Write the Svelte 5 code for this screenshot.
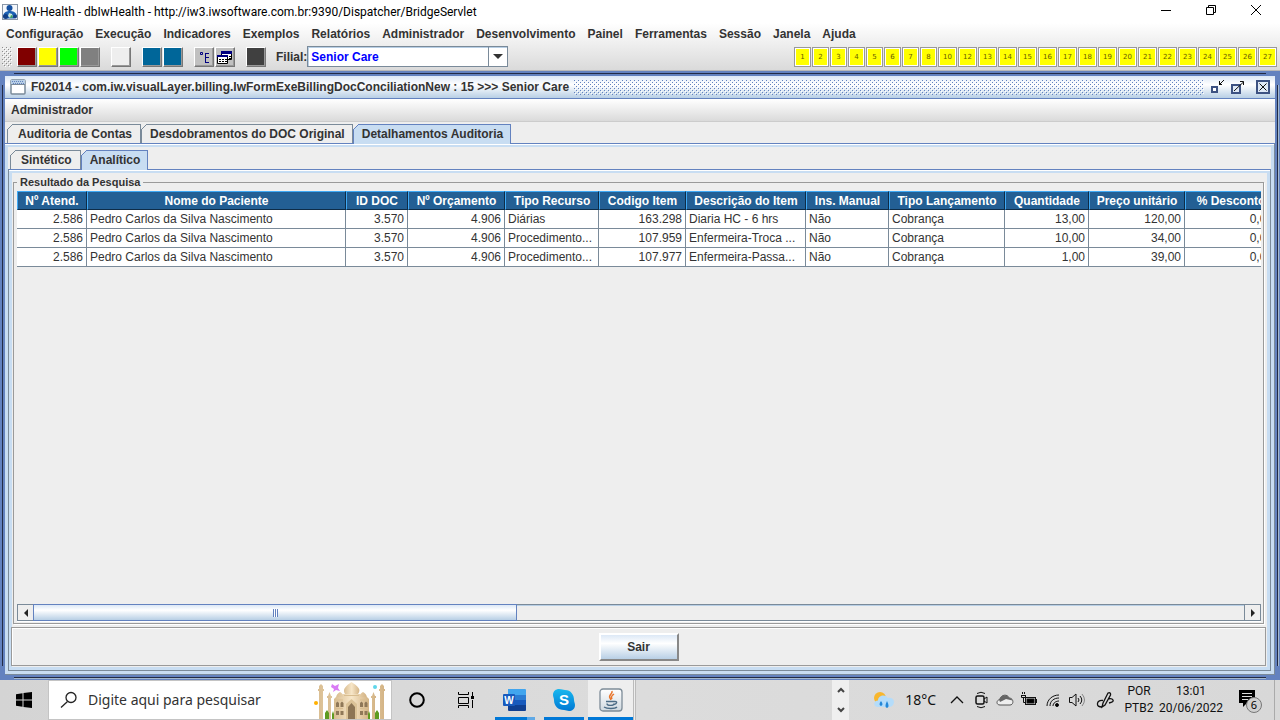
<script>
  const menus = ['Configuração', 'Execução', 'Indicadores', 'Exemplos', 'Relatórios', 'Administrador',
    'Desenvolvimento', 'Painel', 'Ferramentas', 'Sessão', 'Janela', 'Ajuda'];

  // Toolbar swatches, grouped the way the toolbar separates them
  const swatches = [
    ['#800000', '#ffff00', '#00ff00', '#808080'],
    ['#eeeeee'],
    ['#006699', '#006699'],
  ];

  const shortcuts = [1, 2, 3, 4, 5, 6, 7, 8, 10, 12, 13, 14, 15, 16, 17, 18, 19, 20, 21, 22, 23, 24, 25, 26, 27];

  const columns = [
    { label: 'Nº Atend.', w: 70, num: true },
    { label: 'Nome do Paciente', w: 259 },
    { label: 'ID DOC', w: 62, num: true },
    { label: 'Nº Orçamento', w: 97, num: true },
    { label: 'Tipo Recurso', w: 94 },
    { label: 'Codigo Item', w: 87, num: true },
    { label: 'Descrição do Item', w: 120 },
    { label: 'Ins. Manual', w: 83 },
    { label: 'Tipo Lançamento', w: 116 },
    { label: 'Quantidade', w: 84, num: true },
    { label: 'Preço unitário', w: 96, num: true },
    { label: '% Desconto', w: 92, num: true },
  ];

  const rows = [
    ['2.586', 'Pedro Carlos da Silva Nascimento', '3.570', '4.906', 'Diárias', '163.298', 'Diaria HC - 6 hrs', 'Não', 'Cobrança', '13,00', '120,00', '0,00'],
    ['2.586', 'Pedro Carlos da Silva Nascimento', '3.570', '4.906', 'Procedimento...', '107.959', 'Enfermeira-Troca ...', 'Não', 'Cobrança', '10,00', '34,00', '0,00'],
    ['2.586', 'Pedro Carlos da Silva Nascimento', '3.570', '4.906', 'Procedimento...', '107.977', 'Enfermeira-Passa...', 'Não', 'Cobrança', '1,00', '39,00', '0,00'],
  ];

  const tableWidth = columns.reduce((sum, c) => sum + c.w, 0);

  let outerTab = $state('Detalhamentos Auditoria');
  let innerTab = $state('Analítico');
  let filial = $state('Senior Care');
</script>

{#snippet tabs(list, current, pick)}
  <div class="tabs" role="tablist">
    {#each list as name}
      <button class="tab" class:active={name === current} role="tab" aria-selected={name === current} onclick={() => pick(name)}>
        <svg class="notch" width="6" height="6" viewBox="0 0 6 6" aria-hidden="true">
          <path class="cut" d="M0 0H6L0 6Z" />
          <path class="edge" d="M0 6L6 0" />
        </svg>
        {name}
      </button>
    {/each}
  </div>
{/snippet}

<div class="app">
  <header class="titlebar">
    <svg class="logo" width="16" height="16" viewBox="0 0 16 16" aria-hidden="true">
      <rect x=".5" y=".5" width="15" height="15" fill="#f4f7fb" stroke="#8a97a8" />
      <circle cx="7.5" cy="4" r="3" fill="#1550a0" />
      <path d="M1 13C1 9 4 7 7.5 7S14 8 15 12L12 14.500H4Z" fill="#1c62b5" />
      <circle cx="3.500" cy="12.500" r="2.500" fill="#123f86" />
      <circle cx="13" cy="12.500" r="2" fill="#123f86" />
      <path d="M7 9L10 10L11 13L8 14L6 12Z" fill="#cfe9d8" />
      <path d="M9 11L11 12L10 14H8Z" fill="#38a060" />
    </svg>
    <h1>IW-Health - dbIwHealth - http://iw3.iwsoftware.com.br:9390/Dispatcher/BridgeServlet</h1>
    <div class="wincontrols">
      <button aria-label="Minimizar"><svg width="12" height="12" viewBox="0 0 12 12"><path d="M1 6.500H11" /></svg></button>
      <button aria-label="Restaurar"><svg width="12" height="12" viewBox="0 0 12 12"><path d="M1.500 3.500H8.500V10.500H1.500ZM3.500 3.500V1.500H10.500V8.500H8.500" /></svg></button>
      <button aria-label="Fechar"><svg width="12" height="12" viewBox="0 0 12 12"><path d="M1 1L11 11M11 1L1 11" /></svg></button>
    </div>
  </header>

  <div class="topbars">
    <nav class="menubar">
      {#each menus as m}<button>{m}</button>{/each}
    </nav>

    <div class="toolbar">
      <svg class="grip" width="10" height="20" aria-hidden="true">
        <defs>
          <pattern id="gripDots" width="4" height="4" patternUnits="userSpaceOnUse">
            <rect x="0" y="0" width="1" height="1" fill="#8c8c8c" /><rect x="1" y="1" width="1" height="1" fill="#fff" />
            <rect x="2" y="2" width="1" height="1" fill="#8c8c8c" /><rect x="3" y="3" width="1" height="1" fill="#fff" />
          </pattern>
        </defs>
        <rect width="10" height="20" fill="url(#gripDots)" />
      </svg>
      {#each swatches as group}
        <div class="group">
          {#each group as color}
            <button class="swatch" style="background-color: {color}" aria-label="Atalho"></button>
          {/each}
        </div>
      {/each}
      <div class="group">
        <button class="swatch silver" aria-label="Árvore">
          <svg width="18" height="18" viewBox="0 0 18 18">
            <path d="M5.500 4.500H7.500V6.500H5.500ZM10.500 5V14.500M10 5.500H14M10 9.500H14M10 14.500H14" fill="none" stroke="#000080" />
          </svg>
        </button>
        <button class="swatch silver" aria-label="Janelas">
          <svg width="18" height="18" viewBox="0 0 18 18">
            <path d="M5.500 3.500H15.500V11.500H5.500Z" fill="#fff" stroke="#000" />
            <path d="M5 3H16V6H5Z" fill="#000080" />
            <path d="M1.500 7.500H11.500V15.500H1.500Z" fill="#fff" stroke="#000" />
            <path d="M1 7H12V9H1Z" fill="#000080" />
            <path d="M3 11.500H11M3 13.500H11" stroke="#000" stroke-dasharray="2 1" />
            <path d="M13 8.500H15M13 10.500H15" stroke="#000" />
          </svg>
        </button>
      </div>
      <button class="swatch dark" aria-label="Console"></button>
      <label for="filial">Filial:</label>
      <div class="combo">
        <select id="filial" bind:value={filial}><option>Senior Care</option></select>
        <span class="arrow"><svg width="10" height="5" viewBox="0 0 10 5" aria-hidden="true"><path d="M0 0H10L5 5Z" fill="#333" /></svg></span>
      </div>
      <div class="shortcuts">
        {#each shortcuts as n}<button class:wide={n > 9}>{n}</button>{/each}
      </div>
    </div>
  </div>

  <main class="frame">
    <div class="frame-title">
      <svg width="16" height="16" viewBox="0 0 16 16" aria-hidden="true">
        <rect x="1" y="1" width="14" height="14" rx="1" fill="#fff" stroke="#7a8a99" stroke-width="1.500" />
        <path d="M1 1H15V5H1Z" fill="#b8cfe5" />
        <path d="M2 2.500H14M3 4.500H14" stroke="#6382bf" stroke-dasharray="1 1" />
        <path d="M1 5.500H15" stroke="#7a8a99" />
      </svg>
      <h2>F02014 - com.iw.visualLayer.billing.IwFormExeBillingDocConciliationNew : 15 &gt;&gt;&gt; Senior Care</h2>
      <svg class="dots" aria-hidden="true">
        <defs>
          <pattern id="titleDots" width="4" height="4" patternUnits="userSpaceOnUse">
            <rect x="0" y="0" width="1" height="1" fill="#6382bf" /><rect x="1" y="1" width="1" height="1" fill="#fff" />
            <rect x="2" y="2" width="1" height="1" fill="#6382bf" /><rect x="3" y="3" width="1" height="1" fill="#fff" />
          </pattern>
        </defs>
        <rect width="100%" height="100%" fill="url(#titleDots)" />
      </svg>
      <div class="frame-controls">
        <button aria-label="Minimizar janela">
          <svg width="16" height="16" viewBox="0 0 16 16">
            <path d="M3 8H8V13H3Z" fill="#fff" stroke="#3d5282" stroke-width="2" />
            <path d="M10 5.500H13M10.500 2V6M10.500 5.500L15 1" fill="none" stroke="#111" />
          </svg>
        </button>
        <button aria-label="Maximizar janela">
          <svg width="16" height="16" viewBox="0 0 16 16">
            <path d="M2 6H10V14H2Z" fill="#dfe9f6" stroke="#3d5282" stroke-width="2" />
            <path d="M4 12L13.500 3M10 2.500H13.500V6" fill="none" stroke="#111" />
          </svg>
        </button>
        <button aria-label="Fechar janela">
          <svg width="16" height="16" viewBox="0 0 16 16">
            <rect x="2" y="2" width="12" height="12" fill="#dfe9f6" stroke="#3d5282" stroke-width="2" />
            <path d="M4.500 4.500L11.500 11.500M11.500 4.500L4.500 11.500" stroke="#111" />
          </svg>
        </button>
      </div>
    </div>

    <nav class="menubar inner"><button>Administrador</button></nav>

    <div class="outer">
      {@render tabs(['Auditoria de Contas', 'Desdobramentos do DOC Original', 'Detalhamentos Auditoria'], outerTab, (n) => (outerTab = n))}
      <section class="panel outer-panel">
        {@render tabs(['Sintético', 'Analítico'], innerTab, (n) => (innerTab = n))}
        <section class="panel inner-panel">
          <div class="results" role="group" aria-labelledby="results-title">
            <h3 id="results-title">Resultado da Pesquisa</h3>
            <div class="viewport">
              <table style="width: {tableWidth}px">
                <colgroup>
                  {#each columns as c}<col style="width: {c.w}px" />{/each}
                </colgroup>
                <thead>
                  <tr>{#each columns as c}<th>{c.label}</th>{/each}</tr>
                </thead>
                <tbody>
                  {#each rows as row}
                    <tr>{#each row as cell, i}<td class:num={columns[i].num}>{cell}</td>{/each}</tr>
                  {/each}
                </tbody>
              </table>
            </div>
            <div class="scrollbar">
              <button aria-label="Rolar para a esquerda"><svg width="4" height="8" viewBox="0 0 4 8"><path d="M4 0V8L0 4Z" fill="#222" /></svg></button>
              <div class="track"><div class="thumb"><i></i></div></div>
              <button aria-label="Rolar para a direita"><svg width="4" height="8" viewBox="0 0 4 8"><path d="M0 0V8L4 4Z" fill="#222" /></svg></button>
            </div>
          </div>
          <div class="actions"><button class="sair">Sair</button></div>
        </section>
      </section>
    </div>
  </main>

  <footer class="taskbar">
    <button class="start" aria-label="Iniciar">
      <svg width="16" height="16" viewBox="0 0 16 16"><path d="M0 2.200L6.500 1.300V7.500H0ZM7.500 1.100L16 0V7.500H7.500ZM0 8.500H6.500V14.700L0 13.800ZM7.500 8.500H16V16L7.500 14.900Z" /></svg>
    </button>
    <div class="search">
      <svg width="18" height="18" viewBox="0 0 18 18" aria-hidden="true"><circle cx="11" cy="6.500" r="5" fill="none" stroke="#222" stroke-width="1.300" /><path d="M7.500 10.500L1 16.500" stroke="#222" stroke-width="1.300" /></svg>
      <input type="text" aria-label="Pesquisar" placeholder="Digite aqui para pesquisar" />
      <svg class="taj" width="75" height="37" viewBox="0 0 75 37" aria-hidden="true">
        <defs>
          <linearGradient id="stone" x1="0" x2="1">
            <stop offset="0" stop-color="#d9bd91" /><stop offset=".5" stop-color="#f7e6c8" /><stop offset="1" stop-color="#d3b384" />
          </linearGradient>
        </defs>
        <g fill="url(#stone)">
          <path d="M5 37V9H4V7H5L5 4L7 2L9 4V7H10V9H9V37ZM66 37V9H65V7H66V4L68 2L70 4V7H71V9H70V37Z" />
          <path d="M14 37V16H13V14H14L15.500 10L17 14H18V16H17V37ZM58 37V16H57V14H58L59.500 10L61 14H62V16H61V37Z" />
          <path d="M22 16C22 13 24 11 26 10C28 11 30 13 30 16ZM45 16C45 13 47 11 49 10C51 11 53 13 53 16Z" />
          <path d="M20 37V17L22 15H29V12H46V15H53L55 17V37Z" />
          <path d="M31 12C28 7 32 4 37.500 0C43 4 48 7 44 12Z" />
        </g>
        <path d="M21 18H29M46 18H54M30 13.500H45M21 26.500H29M46 26.500H54" stroke="#d8bd90" />
        <path d="M32 37V22L37.500 17L43 22V37Z" fill="#dcc398" />
        <path d="M34 37V25L37.500 21L41 25V37Z" fill="#8d7555" />
        <path d="M22 25V21L23.500 19.500L25 21V25ZM26.500 25V21L28 19.500L29.500 21V25ZM46 25V21L47.500 19.500L49 21V25ZM50.500 25V21L52 19.500L53.500 21V25ZM22 33V29H25V33ZM26.500 33V29H29.500V33ZM46 33V29H49V33ZM50.500 33V29H53.500V33Z" fill="#8f7858" />
        <path d="M11 37V31L13 28L15 31V37ZM18 37V32L19 29L20 32V37ZM54 37V32L55 29L56 32V37ZM61 37V31L63 28L65 31V37Z" fill="#5e9b20" />
        <path d="M18 2L21 4L25 2L24 6L26 9L22 8L19 10L20 7L17 5Z" fill="#d97bf5" />
        <circle cx="2" cy="21" r="2" fill="#ffb000" /><circle cx="61" cy="5" r="2" fill="#5fd6ea" />
      </svg>
    </div>
    <div class="apps">
      <button aria-label="Cortana"><svg width="18" height="18" viewBox="0 0 18 18"><circle cx="9" cy="9" r="6.800" fill="none" stroke="#000" stroke-width="2" /></svg></button>
      <button aria-label="Visão de tarefas">
        <svg width="18" height="18" viewBox="0 0 18 18"><path d="M1.500 1V3.500H11.500V1M1.500 6.500H11.500V12.500H1.500ZM1.500 17V14.500H11.500V17M15.500 1V5M15.500 9V17" fill="none" stroke="#000" /><rect x="14" y="5" width="3" height="3" /></svg>
      </button>
      <button class="running stacked" aria-label="Word">
        <svg width="24" height="24" viewBox="0 0 24 24">
          <path d="M5 1H22Q23 1 23 2V7H5Z" fill="#41a5ee" /><path d="M5 7H23V12H5Z" fill="#2b7cd3" /><path d="M5 12H23V17H5Z" fill="#185abd" /><path d="M5 17H23V22Q23 23 22 23H6Q5 23 5 22Z" fill="#103f91" />
          <rect x="0" y="6" width="12" height="12" rx="1" fill="#185abd" />
          <text x="6" y="16" text-anchor="middle" font-family="Liberation Sans" font-weight="bold" font-size="10" fill="#fff">W</text>
        </svg>
      </button>
      <button class="running" aria-label="Skype">
        <svg width="24" height="24" viewBox="0 0 24 24">
          <defs><linearGradient id="skype" x2="0" y2="1"><stop offset="0" stop-color="#19b8ee" /><stop offset="1" stop-color="#0078d4" /></linearGradient></defs>
          <path d="M7 1C10 1 11 2 13 2C19 2 22 7 22 12C22 14 23 15 23 17C23 21 20 23 17 23C15 23 14 22 12 22C6 22 2 18 2 12C2 10 1 9 1 7C1 3 4 1 7 1Z" fill="url(#skype)" />
          <text x="12" y="17" text-anchor="middle" font-family="Liberation Sans" font-weight="bold" font-size="15" fill="#fff">S</text>
        </svg>
      </button>
      <button class="running current" aria-label="Java">
        <svg width="24" height="24" viewBox="0 0 24 24">
          <defs><linearGradient id="java" x2="0" y2="1"><stop offset="0" stop-color="#fff" /><stop offset="1" stop-color="#cfd9e0" /></linearGradient></defs>
          <rect x="1" y="1" width="22" height="22" rx="3" fill="url(#java)" stroke="#7d8c98" stroke-width="1.300" />
          <path d="M13 3C14 6 9 7 11 10L12 12M15 6C12 8 12 9 13 11" fill="none" stroke="#e8742a" stroke-width="1.500" />
          <path d="M7 13.500H15M8 15.500C8 18 15 18 15 15.500M15 13.500C19 13 18 16 15 16.500M5 19C8 21 16 21 18 19" fill="none" stroke="#4b6c86" stroke-width="1.400" />
        </svg>
      </button>
    </div>

    <div class="stepper">
      <button aria-label="Anterior"><svg width="8" height="6" viewBox="0 0 8 6"><path d="M1 5L4 2L7 5" /></svg></button>
      <button aria-label="Próximo"><svg width="8" height="6" viewBox="0 0 8 6"><path d="M1 1L4 4L7 1" /></svg></button>
    </div>

    <button class="weather">
      <svg width="22" height="18" viewBox="0 0 22 18" aria-hidden="true">
        <circle cx="7" cy="7" r="6" fill="#f8b62d" />
        <path d="M5 16C0 16 0 9.500 5 9.500C5 4 13 3 14.500 7C20 6 22 10 20.500 13C20 15 18 16 16 16Z" fill="#b4dcfa" />
        <path d="M8 10Q5 14 8 15Q11 14 8 10ZM14 10Q11 16 14 17Q17 16 14 10Z" fill="#2387d8" />
      </svg>
      18°C
    </button>

    <div class="tray">
      <svg width="18" height="18" viewBox="0 0 18 18" aria-hidden="true"><path d="M3 12L9 6L15 12" stroke-width="1.300" /></svg>
      <svg width="18" height="18" viewBox="0 0 18 18" aria-hidden="true"><path d="M5 2.500Q9 0 13 2.500M5 15.500Q9 18 13 15.500" /><rect x="4" y="5" width="8" height="8" rx="1.500" stroke-width="1.500" /><path d="M12 8L15 6V12L12 10" /></svg>
      <svg width="18" height="18" viewBox="0 0 18 18" aria-hidden="true"><path d="M4 14C0 14 0 9 4 8.500C5 3 12 3 13 7C18 7 18 14 14 14Z" fill="#eee" stroke="#555" /><path d="M3 8.500C5 3 12 3 13 7C15 7 16 8 16.500 9.500L10 8L4 11Z" fill="#666" stroke="none" /></svg>
      <svg width="18" height="18" viewBox="0 0 18 18" aria-hidden="true"><rect x="5.500" y="6.500" width="10" height="7" /><rect x="7" y="8" width="7" height="4" fill="#000" /><path d="M16.500 8V12M1 4.500H6M2.500 3V1M4.500 3V1M1.500 4V6.500H5.500V4M3.500 7V11.500H5" /></svg>
      <svg width="18" height="18" viewBox="0 0 18 18" aria-hidden="true"><path d="M3 15C3 9 8 4 15 4M6 15C6 10 10 7 15 7M9 15C9 12 12 10 15 10" /><circle cx="13" cy="14" r="1.500" fill="#000" /></svg>
      <svg width="18" height="18" viewBox="0 0 18 18" aria-hidden="true"><path d="M1.500 6.500H4L8 3V15L4 11.500H1.500ZM10 7Q12 9 10 11M12 5Q15.500 9 12 13" /><path d="M14 3Q19 9 14 15" stroke="#888" /></svg>
      <svg class="pen" width="18" height="18" viewBox="0 0 18 18" aria-hidden="true"><path d="M7 12L12 2Q15 1 14.500 4L9 14L6 16ZM7 9.500Q2 9 1.500 12.500T6 16M12 8Q16 7 17 9T13 12" stroke-width="1.300" /></svg>
    </div>
    <div class="stack lang"><span>POR</span><span>PTB2</span></div>
    <div class="stack clock"><time>13:01</time><time>20/06/2022</time></div>
    <button class="notes" aria-label="Notificações">
      <svg width="28" height="28" viewBox="0 0 28 28">
        <path d="M2 4H18V17H10L6 21V17H2Z" fill="#000" /><path d="M5 7.500H15M5 10.500H15M5 13.500H11" stroke="#ddd" />
        <circle cx="17" cy="19" r="7.500" fill="#d0d0d0" stroke="#777" />
        <text x="17" y="23" text-anchor="middle" font-family="Noto Sans" font-size="11" fill="#000">6</text>
      </svg>
    </button>
  </footer>
</div>

<style>
  :global(body) { margin: 0; }

  .app {
    --blue: #6382bf;
    --light: #c8ddf2;
    --slate: #7a8a99;
    display: flex;
    flex-direction: column;
    min-height: 100vh;
    overflow: hidden;
    background: #eee;
    color: #333;
    font: bold 12px/14px "Liberation Sans", Arial, sans-serif;
  }
  .app * { box-sizing: border-box; }
  button, input, select { font: inherit; color: inherit; border: 0; padding: 0; margin: 0; background: none; border-radius: 0; }
  h1, h2, h3 { margin: 0; font: inherit; white-space: nowrap; }
  svg { display: block; flex: none; }

  /* Native window caption */
  .titlebar { display: flex; align-items: center; height: 23px; padding: 0 2px; gap: 5px; background: #fff; color: #000; }
  .titlebar h1 { flex: 1; font: 12px/20px Roboto, "Noto Sans", sans-serif; }
  .wincontrols { display: flex; align-self: flex-start; }
  .wincontrols button { display: grid; place-items: center; width: 45px; height: 20px; }
  .wincontrols path { fill: none; stroke: #000; }

  .topbars { padding-bottom: 1px; background: linear-gradient(#fff, #dadada); border-bottom: 1px solid #b8b8b8; }
  .menubar { display: flex; gap: 12px; height: 21px; padding: 0 6px; align-items: center; }

  .toolbar { display: flex; align-items: center; height: 25px; padding: 0 3px 0 2px; }
  .grip { margin-right: 5px; }
  .group { display: flex; gap: 1px; margin-right: 11px; }
  .swatch { width: 20px; height: 20px; border: 1px solid; border-color: #fff #777 #777 #fff; box-shadow: inset -1px -1px #999; }
  .silver { background: #c0c0c0; }
  .dark { background: #404040; margin-right: 10px; }
  .combo { display: flex; position: relative; width: 201px; height: 21px; border: 1px solid var(--slate); background: #fff; box-shadow: inset 1px 1px #b8cfe5; }
  .combo select { flex: 1; padding-left: 3px; appearance: none; color: #00f; outline: none; }
  .arrow { position: absolute; right: 0; top: 0; bottom: 0; display: grid; place-items: center; width: 19px; border-left: 1px solid var(--slate); pointer-events: none; }
  .shortcuts { display: flex; gap: 1px; margin-left: auto; }
  .shortcuts button { width: 17px; height: 20px; border: 1px solid #999; background: #ff0; box-shadow: inset 0 0 0 1px #fff; color: #665c00; font: 7px/10px "DejaVu Sans", sans-serif; }
  .shortcuts .wide { width: 19px; }

  /* Internal frame with the Metal style bevelled border */
  .frame { position: relative; flex: 1; display: flex; flex-direction: column; border: 5px solid var(--blue); }
  .frame::before, .frame::after { content: ""; position: absolute; pointer-events: none; }
  .frame::before { inset: -3px 9px; border: solid #222b45; border-width: 1px 0; box-shadow: 0 1px #a3b8cc; }
  .frame::after { inset: 9px -3px; border: solid #222b45; border-width: 0 1px; box-shadow: 1px 0 #a3b8cc; }
  .frame-title { display: flex; align-items: center; height: 23px; padding: 0 4px 0 5px; gap: 5px; background: linear-gradient(#dce8f6, #fff 40%, #b8cfe5); border-bottom: 1px solid var(--blue); }
  .dots { flex: 1; width: 0; height: 15px; }
  .frame-controls { display: flex; gap: 5px; }
  .frame-controls button:last-child { margin-left: 4px; }
  .menubar.inner { height: 23px; background: linear-gradient(#fff, #dadada); border-bottom: 1px solid #ccc; }

  .outer { flex: 1; display: flex; flex-direction: column; padding-top: 2px; }
  .tabs { display: flex; padding-left: 2px; position: relative; z-index: 1; }
  .tab { position: relative; height: 19px; padding: 0 7px 0 8px; border: 1px solid var(--slate); border-bottom: 0; background: #eee; white-space: nowrap; }
  .tab:first-child { padding: 0 8px 0 10px; }
  .tab.active { height: 20px; margin-bottom: -1px; padding-bottom: 1px; background: var(--light); border-color: var(--blue); }
  .notch { position: absolute; left: -1px; top: -1px; }
  .cut { fill: #eee; }
  .edge { fill: none; stroke: var(--slate); }
  .active .edge { stroke: var(--blue); }
  .panel { flex: 1; display: flex; flex-direction: column; border: 1px solid var(--slate); border-top-color: var(--blue); box-shadow: inset 0 1px #fff, inset 0 0 0 3px var(--light); }
  .outer-panel { padding: 6px 3px 3px; border-left: 0; }
  .inner-panel { padding: 12px 4px 4px 2px; }

  .results { flex: 1; display: flex; flex-direction: column; margin: 0 2px 3px; padding: 0 2px 2px 3px; border: 1px solid #9a9a9a; box-shadow: 1px 1px #fff; }
  .results h3 { align-self: flex-start; margin: -8px 0 2px; padding: 0 3px; background: #eee; font-size: 11px; }
  .viewport { flex: 1; overflow: hidden; }
  table { table-layout: fixed; border-spacing: 0; }
  th { height: 19px; padding: 0; background: #235f94; color: #fff; border: 1px solid; border-color: #3fa9f5 #0e2c47 #0e2c47 #3fa9f5; white-space: nowrap; }
  td { height: 19px; padding: 0 3px; background: #fff; border: solid var(--slate); border-width: 0 1px 1px 0; font-weight: normal; white-space: nowrap; }
  .num { text-align: right; }

  .scrollbar { display: flex; height: 17px; border: 1px solid var(--slate); box-shadow: 0 1px #fff; }
  .scrollbar button { display: grid; place-items: center; width: 15px; }
  .track { flex: 1; display: flex; border: solid var(--slate); border-width: 0 1px; box-shadow: inset 1px 1px #b8cfe5; }
  .thumb { display: grid; place-items: center; width: 40%; margin: -1px; border: 1px solid var(--blue); background: linear-gradient(#dce8f6, #fff 35%, #b8cfe5); }
  .thumb i { width: 5px; height: 8px; background: repeating-linear-gradient(90deg, var(--blue) 0 1px, #fff 1px 2px); }
  .actions { display: flex; justify-content: center; align-items: center; height: 39px; border: 1px solid #9a9a9a; box-shadow: inset 1px 1px #fff; }
  .sair { width: 80px; height: 28px; border: 2px solid; border-color: #fff #888 #888 #fff; background: linear-gradient(#dce8f6, #fff 35%, #b8cfe5); }

  .taskbar { display: flex; height: 40px; padding-right: 5px; background: linear-gradient(90deg, #d4d4d4, #dcdcdc 50%, #d8d8d8); color: #111; font: 12px/17px Roboto, "Noto Sans", sans-serif; }
  .start { display: grid; place-items: center; width: 48px; }
  .search { display: flex; align-items: center; width: 344px; padding: 0 2px 0 11px; background: #fff; border: 1px solid #c4c4c4; }
  .search input { flex: 1; min-width: 0; margin-left: 10px; font: 14px/20px "Noto Sans", sans-serif; outline: none; }
  .search input::placeholder { color: #333; opacity: 1; }
  .taj { align-self: flex-end; }
  .apps { display: flex; }
  .apps button { position: relative; display: grid; place-items: center; width: 49px; }
  .running::after { content: ""; position: absolute; left: 5px; right: 4px; bottom: 0; height: 3px; background: #0078d7; }
  .stacked::after { background: linear-gradient(90deg, #0078d7 80%, #5fa9e6 80%); }
  .apps .current { width: 48px; background: #eee; border-right: 3px double #bbb; }
  .current::after { left: 0; right: 0; }

  .stepper { display: flex; flex-direction: column; width: 17px; margin-left: auto; background: #efefef; }
  .stepper button { display: grid; place-items: center; flex: 1; }
  .stepper path { fill: none; stroke: #444; stroke-width: 2; }
  .weather { display: flex; align-items: center; gap: 10px; margin: 0 12px 0 24px; font: 14px/20px "Noto Sans", sans-serif; }
  .tray { display: flex; align-items: center; gap: 6px; margin-right: 3px; }
  .tray svg { fill: none; stroke: #111; }
  .tray .pen { margin-left: 4px; }
  .stack { display: flex; flex-direction: column; justify-content: center; align-items: center; white-space: nowrap; }
  .lang { width: 44px; }
  .clock { width: 60px; }
  .notes { display: grid; align-items: center; justify-items: end; width: 54px; padding-right: 9px; border-right: 1px solid #aaa; }
</style>
